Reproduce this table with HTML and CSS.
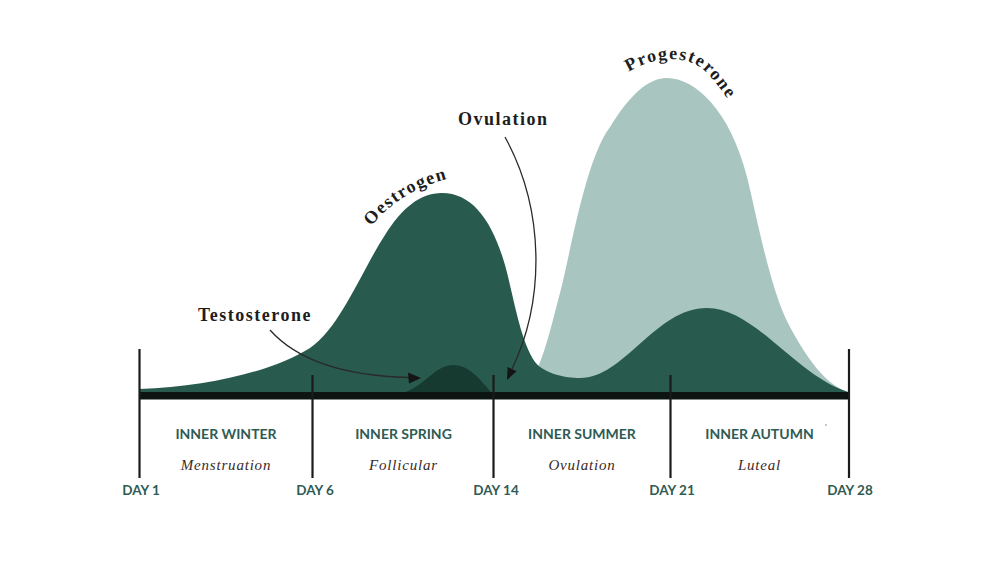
FILE: index.html
```html
<!DOCTYPE html>
<html lang="en">
<head>
<meta charset="utf-8">
<title>Menstrual cycle hormones</title>
<link rel="stylesheet" href="styles.css">
</head>
<body>
<div class="page">
  <svg class="chart" viewBox="0 0 1000 562" width="1000" height="562">
    <path class="prog" d="M515 396 L520 392 C540 380 550 330 560 293 C570 256 585 160 610 127 C630 95 648 78 667 78 C695 78 730 110 747 177 C757 217 770 290 790 327 C805 355 825 385 848 392 L848 396 Z"/>
    <path class="oest" d="M139 396 L139 389 C210 387 275 370 310 348 C340 328 362 270 385 235 C402 208 420 193 442 193 C472 193 492 220 505 265 C514 298 520 340 535 362 C545 374 565 378 580 378 C625 378 655 308 707 308 C755 308 795 375 848 392 L848 396 Z"/>
    <path class="testo" d="M403 393 C425 386 435 365 453 365 C470 365 480 380 492 393 Z"/>
    <rect class="axis" x="139" y="392" width="710" height="7.5"/>
    <g class="ticks">
      <line x1="139.5" y1="349" x2="139.5" y2="478"/>
      <line x1="312.5" y1="375" x2="312.5" y2="478"/>
      <line x1="493.5" y1="375" x2="493.5" y2="478"/>
      <line x1="670.5" y1="375" x2="670.5" y2="478"/>
      <line x1="849" y1="349" x2="849" y2="478"/>
    </g>
    <path class="arrow" d="M270 330 Q310 375 409 377.5"/>
    <polygon class="head" points="421,378 408,372.5 409,383.5"/>
    <path class="arrow" d="M505 137 C545 210 545 300 512 369"/>
    <polygon class="head" points="507,380 507.6,367 516.6,371.3"/>
    <path id="arcO" class="guide" d="M370 228 Q404 184 468 175"/>
    <path id="arcP" class="guide" d="M627 73 C650 58 685 52 706 72 C720 86 731 104 742 122"/>
    <text class="hlabel"><textPath href="#arcO" startOffset="2">Oestrogen</textPath></text>
    <text class="hlabel"><textPath href="#arcP" startOffset="2">Progesterone</textPath></text>
    <text class="hlabel" x="198" y="321">Testosterone</text>
    <text class="hlabel" x="458" y="125">Ovulation</text>
    <circle class="speck" cx="826" cy="425" r="1"/>
  </svg>

  <div class="seasons">
    <div class="season">
      <div class="name">INNER WINTER</div>
      <div class="phase">Menstruation</div>
    </div>
    <div class="season">
      <div class="name">INNER SPRING</div>
      <div class="phase">Follicular</div>
    </div>
    <div class="season">
      <div class="name">INNER SUMMER</div>
      <div class="phase">Ovulation</div>
    </div>
    <div class="season">
      <div class="name">INNER AUTUMN</div>
      <div class="phase">Luteal</div>
    </div>
  </div>

  <div class="days">
    <div class="day"><span>DAY 1</span></div>
    <div class="day"><span>DAY 6</span></div>
    <div class="day"><span>DAY 14</span></div>
    <div class="day"><span>DAY 21</span></div>
    <div class="day"><span>DAY 28</span></div>
  </div>
</div>
</body>
</html>
```

FILE: styles.css
```css
html, body {
  margin: 0;
  padding: 0;
  background: #ffffff;
}

.page {
  position: relative;
  width: 1000px;
  height: 562px;
  overflow: hidden;
  background: #ffffff;
}

.chart {
  position: absolute;
  left: 0;
  top: 0;
}

.prog { fill: #a9c5c0; }
.oest { fill: #285b4d; }
.testo { fill: #163a30; }
.axis { fill: #0c1512; }

.ticks line {
  stroke: #1b1b1b;
  stroke-width: 2.2;
}

.arrow {
  fill: none;
  stroke: #2a2a2a;
  stroke-width: 1.3;
}

.head { fill: #151515; }

.guide { fill: none; stroke: none; }

.hlabel {
  font-family: "Liberation Serif", "Times New Roman", serif;
  font-weight: 700;
  font-size: 18px;
  letter-spacing: 1.5px;
  fill: #1d1d1d;
}

.speck { fill: #b5b5b5; }

.seasons {
  position: relative;
  display: grid;
  grid-template-columns: 174px 181px 176px 179px;
  margin-left: 139px;
  padding-top: 426px;
}

.season {
  display: flex;
  flex-direction: column;
  align-items: center;
}

.name {
  font-family: "Lato", "Open Sans", sans-serif;
  font-weight: 700;
  font-size: 14px;
  line-height: 16px;
  color: #2f5b54;
  white-space: nowrap;
}

.phase {
  margin-top: 13px;
  font-family: "Liberation Serif", "Times New Roman", serif;
  font-style: italic;
  font-size: 15px;
  line-height: 20px;
  letter-spacing: 0.8px;
  color: #3a2a28;
  white-space: nowrap;
}

.days {
  position: relative;
  display: grid;
  grid-template-columns: 174px 181px 176px 178px 0;
  margin-left: 141px;
  margin-top: 7px;
}

.day {
  width: 0;
  display: flex;
  justify-content: center;
}

.day span {
  font-family: "Lato", "Open Sans", sans-serif;
  font-weight: 700;
  font-size: 13.5px;
  line-height: 16px;
  color: #2f5b54;
  white-space: nowrap;
}
```
